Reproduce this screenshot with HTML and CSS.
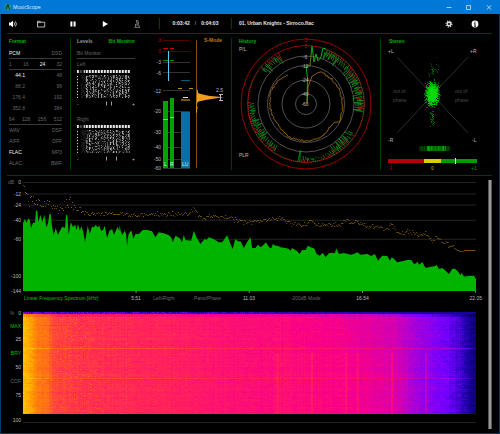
FILE: index.html
```html
<!DOCTYPE html>
<html lang="en">
<head>
  <meta charset="UTF-8">
  <meta name="viewport" content="width=device-width, initial-scale=1.0">
  <title>MusicScope</title>
  <link rel="stylesheet" href="styles.css">
</head>
<body>
  <div class="window">
    <header class="titlebar">
      <svg class="logo" viewBox="0 0 8 8"><circle cx="4" cy="4" r="3.6" fill="#1a8f8a"/><path d="M2 6.5 4 1.2 4.6 4 6 6.8M2.2 3.2h2" fill="none" stroke="#0a3b38" stroke-width="1"/></svg>
      <span class="app-name">MusicScope</span>
      <button aria-label="Minimize"><svg viewBox="0 0 6 6"><path d="M.5 3.5h5"/></svg></button>
      <button aria-label="Maximize"><svg viewBox="0 0 6 6"><path d="M.5 1.5h4v4h-4z"/></svg></button>
      <button aria-label="Close"><svg viewBox="0 0 6 6"><path d="M.8 1.2l4.4 4.4M5.2 1.2.8 5.6"/></svg></button>
    </header>

    <main class="main">
      <div class="toolbar">
        <button class="volume" aria-label="Volume"><svg viewBox="0 0 10 8"><path d="M1 2.6h1.8L5 .8v6.4L2.8 5.4H1z" fill="#fff"/><path d="M6 2.4q1.2 1.6 0 3.2M7.4 1.4q2 2.6 0 5.2" fill="none" stroke="#ccc" stroke-width=".9"/></svg></button>
        <button aria-label="Open"><svg viewBox="0 0 10 8"><path d="M1.5 7V1.2h2.6l.8 1h3.8V7zM1.5 2.6h3.4" fill="none" stroke="#ddd" stroke-width=".8"/></svg></button>
        <button aria-label="Pause"><svg viewBox="0 0 10 8"><path d="M2.4 1.4h2v5.2h-2zM5.6 1.4h2v5.2h-2z" fill="#fff"/></svg></button>
        <button aria-label="Play"><svg viewBox="0 0 10 8"><path d="M2.8 1l5.2 3-5.2 3z" fill="#fff"/></svg></button>
        <button aria-label="Analyse"><svg viewBox="0 0 10 8"><path d="M4.2.6 5.6.2 6.6 3.4l-1.3.4zM5.8 4.4q1.8.2 1.4 2.4M3.4 5h2.6M2.4 7.4h5.6M4 3.6Q3 5 3.6 6.8" fill="none" stroke="#aaa" stroke-width=".7"/></svg></button>
        <div class="time"><span>0:03:42</span><span class="slash">/</span><span>0:04:03</span></div>
        <div class="track">01. Urban Knights - Sirroco.flac</div>
        <button class="narrow" aria-label="Settings"><svg viewBox="0 0 10 8"><circle cx="5" cy="4" r="2.9" fill="none" stroke="#ddd" stroke-width="1.2" stroke-dasharray="1.2 1.08"/><circle cx="5" cy="4" r="1.7" fill="none" stroke="#ddd" stroke-width="1.4"/></svg></button>
        <button class="narrow info" aria-label="Info"><svg viewBox="0 0 10 8"><circle cx="5" cy="4" r="3.4" fill="#fff"/><path d="M5 1.6v1.2M5 3.4v2.8M4.2 6.2h1.8M4.2 3.6h.8" stroke="#000" stroke-width=".9"/></svg></button>
      </div>

      <div class="panels">
        <section class="panel format">
          <h2>Format</h2>
          <div class="row line"><b>PCM</b><span>DSD</span></div>
          <div class="row line"><span>1</span><span>16</span><b>24</b><span>32</span></div>
          <div class="row rate"><b>44.1</b><span>48</span></div>
          <div class="row rate"><span>88.2</span><span>96</span></div>
          <div class="row rate"><span>176.4</span><span>192</span></div>
          <div class="row rate"><span>352.8</span><span>384</span></div>
          <div class="row line"><span>64</span><span>128</span><span>256</span><span>512</span></div>
          <div class="row"><span>WAV</span><span>DSF</span></div>
          <div class="row"><span>AIFF</span><span>DFF</span></div>
          <div class="row"><b>FLAC</b><span>MP3</span></div>
          <div class="row"><span>ALAC</span><span>BWF</span></div>
        </section>

        <section class="panel levels">
          <h2><span class="off">Levels</span><span>Bit Monitor</span></h2>
          <div class="row line"><span>Bit Monitor</span></div>
          <div class="row"><span>Left</span></div>
          <canvas class="bits" width="53" height="28"></canvas>
          <svg class="bit-scale" viewBox="0 0 58 10"><text x="0" y="7">-</text><path d="M29.5 2.5v4M34.5 2.5v4" stroke="#999"/><text x="58" y="7" text-anchor="end">+</text></svg>
          <div class="row"><span>Right</span></div>
          <canvas class="bits" width="53" height="28"></canvas>
          <svg class="bit-scale" viewBox="0 0 58 10"><text x="0" y="7">-</text><path d="M29.5 2.5v4M39.5 2.5v4" stroke="#999"/><text x="58" y="7" text-anchor="end">+</text></svg>
        </section>

        <section class="panel meters">
          <svg viewBox="0 4 86 132">
            <path d="M18 6.5h27M18 17.5h27" stroke="#500"/>
            <path d="M18 28.5h27M18 38.5h27M18 56.5h27M18 77.5h27M18 98.5h27M18 113.5h27M18 125.5h27M18 134.5h27" stroke="#333"/>
            <g text-anchor="end">
              <g class="red"><text x="16" y="8">3</text><text x="16" y="19">0</text></g>
              <text x="16" y="30">-3</text><text x="16" y="41">-6</text><text x="16" y="59">-12</text><text x="16" y="79">-20</text>
              <text x="16" y="100">-30</text><text x="16" y="115">-40</text><text x="16" y="127">-50</text><text x="16" y="136">-60</text>
            </g>
            <path d="M18 14.5h5M25 14.5h4" stroke="#c00"/>
            <path d="M18 26.5h5M25 26.5h4" stroke="#080"/>
            <path d="M23.5 17v30" stroke="#5cc8ec"/>
            <path d="M36 46.5h9" stroke="#0a5a80"/>
            <path d="M33 54.5h4M44 54.5h4" stroke="#c80"/>
            <path d="M38 63.5h5" stroke="#ddd"/>
            <path d="M36 66h9" stroke="#7a4f0c" stroke-width="2"/>
            <path d="M18 67h5v67h-5zM25 64h4v70h-4z" fill="#00a400"/>
            <path d="M18 85.5h5M25 83.5h4" stroke="#3cff3c"/>
            <path d="M36 78h9v56h-9z" fill="#0672a4"/>
            <g class="bar-names"><text x="19" y="132">L</text><text x="25" y="132">R</text><text x="37" y="132">LU</text></g>
            <path d="M51.5 6v128" stroke="#7a500f"/>
            <path d="M52 55l1 2v2l3 1 4 1 5 1 9 .7 5 .6-6 .6-5 .8-6 1-5 1-4 1-1 2v3l1 1-1 1v4h-1z" fill="#f29d1f"/>
            <path d="M75.5 60v6M74 60.5h4M74 66.5h4" fill="none" stroke="#bbb"/>
            <text x="71" y="58">2.5</text>
            <text class="mode" x="59" y="8">S-Mode</text>
          </svg>
        </section>

        <section class="panel history">
          <svg viewBox="0 4 148 132">
            <g fill="none" stroke="#505050">
              <circle cx="74" cy="70" r="10.5"/><circle cx="74" cy="70" r="24"/><circle cx="74" cy="70" r="38.5"/><circle cx="74" cy="70" r="48"/>
            </g>
            <g fill="none" stroke="#900"><circle cx="74" cy="70" r="58.5"/><circle cx="74" cy="70" r="65"/></g>
            <g id="spikes" fill="none" stroke-width=".7"></g>
            <path d="M75 68 75.5 44 74 32h4L80 12l2 16 2-8 2 7 3-4 2-9 3 1" fill="none" stroke="#00b020"/>
            <path d="M78 31 79 20M75 68 76 55" stroke="#a22" stroke-width=".6"/>
            <path id="plr" fill="none" stroke="#b9791a" stroke-width=".8"/>
            <g text-anchor="middle">
              <g class="red"><text x="74" y="8">3</text><text x="74" y="14">0</text></g>
              <text x="73" y="25">-6</text><text x="73" y="34">-12</text><text x="73" y="48">-24</text><text x="73" y="62">-40</text><text x="73" y="72">-60</text>
            </g>
            <text class="title" x="7" y="9">History</text>
            <text x="7" y="17">P/L</text><text x="7" y="123">PLR</text>
          </svg>
        </section>

        <section class="panel stereo">
          <svg viewBox="0 4 111 132">
            <path d="M16 23 87 99M87 23 16 99" stroke="#383838" stroke-width=".8"/>
            <g id="cloud" fill="#00e000"></g>
            <g id="pan" fill="#00c000"></g>
            <text class="title" x="8" y="9">Stereo</text>
            <text x="7" y="19">+L</text><text x="89" y="19">+R</text>
            <text x="7" y="108">-R</text><text x="91" y="108">-L</text>
            <g class="dim"><text x="12" y="59">out of</text><text x="12" y="68">phase</text><text x="74" y="59">out of</text><text x="74" y="68">phase</text></g>
            <path d="M7 125h36v4H7z" fill="#b80000"/><path d="M43 125h17v4H43z" fill="#d8d000"/><path d="M60 125h36v4H60z" fill="#009a00"/>
            <path d="M74.5 124v6" stroke="#dfd"/>
            <text class="red" x="7" y="136">-1</text><text class="yellow" x="50" y="136">0</text><text class="green" x="90" y="136">+1</text>
          </svg>
        </section>
      </div>

      <div class="charts-wrap">
        <div class="charts">
          <section class="chart spectrum">
            <div class="scale">
              <span><i>dB</i>0</span><span>-12</span><span>-24</span><span>-40</span><span>-60</span><span class="low">-100</span><span class="lowest">-144</span>
            </div>
            <svg class="plot" viewBox="68 24 1358 333" preserveAspectRatio="none">
              <path d="M68 25.5H1426M68 60H1426M68 93H1426M68 139H1426M68 196H1426M68 306H1426" stroke="#242424" stroke-width="3"/>
              <g id="peaks" fill="#9a6c0c"></g>
              <polygon fill="#00b400" points="68,351 68,148 74,134 78,146 84,134 88,136 92,162 98,146 104,146 107,110 111,110 114,145 120,122 126,145 132,122 138,160 143,148 147,120 151,120 155,158 160,182 166,162 173,182 180,168 186,158 194,162 197,123 201,124 205,182 211,145 218,158 225,152 228,168 233,150 238,170 243,156 249,175 254,205 262,155 268,180 275,158 281,160 286,152 291,160 297,155 302,170 308,168 313,155 320,192 327,170 335,165 341,182 346,170 352,158 356,170 358,154 361,172 366,182 373,170 377,180 380,215 384,182 390,172 394,172 399,195 405,180 415,180 427,168 440,168 455,172 465,190 475,175 490,178 505,184 512,190 517,205 525,185 537,192 545,205 550,182 555,198 572,200 580,170 588,190 600,210 612,195 618,198 625,190 640,196 655,205 665,205 680,184 692,215 697,225 704,195 712,202 720,202 730,222 740,204 750,190 755,222 765,222 772,212 780,220 788,214 796,205 803,215 808,222 813,222 817,210 825,215 832,215 840,220 855,222 865,225 870,230 875,222 890,232 897,240 905,228 915,228 922,215 930,220 938,222 942,225 948,240 958,245 967,236 975,250 985,238 995,236 1003,238 1007,223 1015,240 1030,237 1050,242 1060,240 1070,235 1080,242 1100,240 1112,246 1123,240 1132,260 1145,245 1160,246 1168,260 1173,250 1180,254 1190,265 1205,262 1220,258 1232,258 1240,270 1247,268 1250,262 1255,272 1265,265 1275,282 1290,278 1305,276 1308,272 1315,285 1325,282 1335,290 1345,300 1355,284 1363,284 1370,290 1380,304 1383,296 1390,308 1405,306 1420,306 1426,316 1426,351"/>
              <path d="M407 351v6M746 351v6M1086 351v6M1425 351v6" stroke="#888" stroke-width="3"/>
            </svg>
            <div class="axis">
              <button class="on">Linear Frequency Spectrum [kHz]</button>
              <span>5.51</span>
              <button>Left/Right</button>
              <button>Pano/Phase</button>
              <span>11.03</span>
              <button>-200dB Mode</button>
              <span>16.54</span>
              <span class="last">22.05</span>
            </div>
          </section>

          <section class="chart spectrogram">
            <div class="scale">
              <span><i>%</i>0</span><button class="on">MAX</button><span>25</span><button class="on">BRY</button><span>50</span><button>COF</button><span>75</span><span class="low">100</span>
            </div>
            <div class="plot">
              <canvas id="heat" width="453" height="102"></canvas>
            </div>
          </section>
        </div>
        <div class="scrollbar"></div>
      </div>
    </main>
  </div>
  <script src="script.js"></script>
</body>
</html>
```
FILE: styles.css
```css
* {
  box-sizing: border-box;
}
body {
  margin: 0;
  background: #000;
  color: #bbb;
  font: 5px/11px "Liberation Sans", Arial, sans-serif;
}
button {
  padding: 0;
  border: 0;
  background: none;
  color: inherit;
  font: inherit;
}
svg,
canvas {
  display: block;
}
.window {
  min-height: 100vh;
  border: solid #003a66;
  border-width: 0 1px 1px;
}

/* title bar */
.titlebar {
  display: flex;
  align-items: center;
  height: 14px;
  margin: 0 -1px;
  padding: 0 1px 0 4px;
  background: #0078d7;
}
.logo {
  width: 8px;
  height: 8px;
}
.app-name {
  flex: 1;
  padding-left: 1px;
  color: #e4f1fc;
  font-family: "Open Sans", sans-serif;
}
.titlebar button {
  display: flex;
  justify-content: center;
  width: 20px;
}
.titlebar button svg {
  width: 6px;
  height: 6px;
  fill: none;
  stroke: #cfe5f8;
  stroke-width: .8;
}
.main {
  padding: 0 7px 0 6px;
}

/* toolbar */
.toolbar {
  display: flex;
  align-items: center;
  height: 20px;
  border-bottom: 1px solid #004000;
  color: #e6e6e6;
  font-weight: bold;
}
.toolbar button {
  display: flex;
  justify-content: center;
  width: 32px;
}
.toolbar button.volume {
  width: 12px;
  margin-right: 6px;
}
.toolbar button.narrow {
  width: 26px;
}
.toolbar button.info {
  margin-right: 4px;
}
.toolbar svg {
  width: 10px;
  height: 8px;
}
.time {
  display: flex;
  justify-content: center;
  gap: 5px;
  width: 73px;
  margin-left: 6px;
  border: solid #004000;
  border-width: 0 1px;
}
.slash {
  color: #888;
}
.track {
  flex: 1;
  padding-left: 7px;
}

/* panels */
.panels {
  display: grid;
  grid-template-columns: 64fr 74fr 87fr 149fr 111fr;
  padding: 4px 0 5px;
  border-bottom: 1px solid #004000;
}
.panel {
  border-right: 1px solid #003c00;
}
.levels,
.stereo {
  border-right: 0;
}
.panel h2 {
  display: flex;
  justify-content: space-between;
  margin: 0 0 4px;
  color: #00b400;
  font-size: 5px;
  line-height: 6px;
}
.panel h2 .off {
  color: #999;
}
.format {
  padding: 0 8px 0 2px;
}
.levels {
  padding: 0 10px 0 6px;
}
.row {
  display: flex;
  justify-content: space-between;
  height: 11px;
  color: #666;
}
.row b {
  color: #f0f0f0;
  font-weight: normal;
}
.line {
  border-bottom: 1px solid #3a3a3a;
}
.rate :first-child {
  width: 16px;
  text-align: right;
}
.bits {
  width: 53px;
  height: 28px;
}
.bit-scale {
  margin: 1px 0 5px;
}
.panel text {
  fill: #bbb;
  font-size: 5px;
}
.panel .bar-names text {
  fill: #dfd;
}
.panel .title {
  fill: #00b400;
  font-weight: bold;
}
.panel .mode {
  fill: #b87a14;
  font-weight: bold;
}
.panel .red text,
.panel .red {
  fill: #c00000;
}
.panel .yellow {
  fill: #c0b800;
}
.panel .green {
  fill: #00a000;
}
.panel .dim text {
  fill: #484848;
}

/* charts */
.charts-wrap {
  display: flex;
}
.charts {
  flex: 1;
}
.chart {
  display: grid;
  grid-template-columns: 16px 1fr 12px;
}
.spectrum {
  grid-template-rows: 116px 10px;
  margin-top: 1px;
}
.spectrogram {
  margin-top: 4px;
}
.scale {
  display: grid;
  grid-row: 1 / 3;
  align-items: center;
  justify-items: end;
  padding-right: 2px;
}
.scale > * {
  white-space: nowrap;
}
.scale i {
  margin-right: 4px;
  color: #666;
  font-style: normal;
}
.scale button,
.axis button {
  color: #666;
}
.scale .on,
.axis .on {
  color: #00c000;
}
.spectrum .scale {
  grid-template-rows: 11px 12px 11px 19px 19px 18px 18px 12px;
}
.spectrum .low {
  grid-row: 7;
}
.spectrum .lowest {
  grid-row: 8;
}
.spectrum .plot {
  width: 100%;
  height: 111px;
  margin-top: 5px;
}
.axis {
  display: grid;
  grid-column: 2 / 4;
  grid-template-columns: 100fr 26fr 30fr 57fr 26fr 87fr 27fr 112fr;
  line-height: 10px;
  text-align: center;
  white-space: nowrap;
}
.axis > :first-child {
  padding-left: 1px;
  text-align: left;
}
.axis .last {
  padding-right: 6px;
  text-align: right;
}
.spectrogram .scale {
  grid-template-rows: 13px 13px 13px 14px 14px 14px 14px 12px 12px;
}
.spectrogram .low {
  grid-row: 9;
}
.spectrogram .plot {
  height: 116px;
  padding-top: 5px;
  border-bottom: 1px solid #222;
}
#heat {
  width: 100%;
  height: 102px;
}
.scrollbar {
  width: 4px;
  margin: 4px 0 -3px;
  border: solid #555;
  border-width: 0 1px;
  background: #999;
}
```
FILE: script.js
```js
let seed = 7
function rnd() {
  seed = (seed * 16807) % 2147483647
  return seed / 2147483647
}
function gauss() {
  return rnd() + rnd() + rnd() + rnd() - 2
}
function rect(x, y, w, h, a) {
  return `<rect x="${x}" y="${y}" width="${w}" height="${h}" opacity="${a.toFixed(2)}"/>`
}
function lerp(points, x) {
  let i = 1
  while (i < points.length - 1 && points[i][0] < x) i++
  const [x0, y0] = points[i - 1]
  const [x1, y1] = points[i]
  return y0 + (y1 - y0) * (x - x0) / (x1 - x0)
}

// bit monitor
document.querySelectorAll('.bits').forEach(c => {
  const g = c.getContext('2d')
  const levels = [1, 0.3, 0.75]
  for (let x = 0; x < 53; x++) {
    let top = [1, 0.8, 0.25][x % 3]
    if (x > 1 && x < 7) top *= 0.3
    g.fillStyle = `rgba(235,235,235,${top})`
    g.fillRect(x, 0, 1, 3)
    const col = x < 8 ? 0.12 : levels[(x * 2) % 3] * (0.4 + rnd() * 0.4)
    for (let y = 5; y < 28; y++) {
      let a = rnd() < 0.5 ? col : col * 0.15
      if (x === 0) a = y % 3 ? 0.15 : 0.9
      if (x > 0 && x < 4) a = 0
      g.fillStyle = `rgba(225,225,225,${a})`
      g.fillRect(x, y, 1, 1)
    }
  }
})

// history: [from, to, depth] in degrees clockwise from the top
const bursts = [[20, 58, 12], [58, 97, 11], [122, 150, 11], [150, 184, 6], [214, 240, 10], [240, 272, 10], [308, 332, 13]]
let green = ''
let red = ''
function pt(deg, r) {
  const a = deg * Math.PI / 180
  return (74 + Math.sin(a) * r).toFixed(1) + ' ' + (70 - Math.cos(a) * r).toFixed(1)
}
bursts.forEach(([from, to, depth]) => {
  for (let d = from; d < to; d += 2.7) {
    const r = 58 - depth * (0.5 + rnd() * 0.5)
    green += `M${pt(d, 57 - rnd() * 2)}L${pt(d + 1, r)}`
    if (rnd() < 0.4) green += `L${pt(d + 1.6, 57)}`
    if (rnd() < 0.7) red += `M${pt(d + 1.6, 58)}L${pt(d + 1.8, r + 3)}`
  }
})
green += `M${pt(186, 58)}L${pt(187, 47)}L${pt(188, 58)}`
for (let d = 20; d < 305; d += 2) {
  green += `M${pt(d, 58)}L${pt(d + 0.8, 58)}`
}
document.getElementById('spikes').innerHTML = `<path stroke="#c22" d="${red}"/><path stroke="#00b020" d="${green}"/>`

const plr = [[12, 28], [17, 31], [22, 35], [35, 35], [60, 36], [90, 36], [118, 38], [125, 33], [135, 33], [150, 36], [180, 37], [205, 37], [222, 35], [245, 35], [270, 36], [290, 37], [310, 36], [328, 34]]
let d = 'M75 70 76 53'
for (let a = 12; a <= 328; a += 2) {
  d += 'L' + pt(a, lerp(plr, a) + gauss() * 0.8)
}
document.getElementById('plr').setAttribute('d', d)

// stereo cloud and panorama
let cloud = ''
for (let i = 0; i < 1300; i++) {
  cloud += rect(Math.round(51 + gauss() * 5), Math.round(60 + gauss() * 9), 1, 1, 0.3 + rnd() * 0.3)
}
for (let i = 0; i < 34; i++) {
  cloud += rect(Math.round(51 + gauss() * 5), Math.round(37 + gauss() * 8), 1, 1, 0.3)
  cloud += rect(Math.round(51 + gauss() * 2), Math.round(82 + gauss() * 9), 1, 1, 0.4)
}
document.getElementById('cloud').innerHTML = cloud
let pan = ''
for (let x = 38; x < 69; x++) {
  pan += rect(x, 112, 1, 5, (x < 46 || x > 64 ? 0.4 : 1) * (0.2 + rnd() * 0.8))
}
document.getElementById('pan').innerHTML = pan

// spectrum peaks
const peak = [[68, 55], [75, 48], [85, 75], [100, 75], [120, 88], [150, 92], [175, 110], [190, 95], [210, 85], [230, 105], [260, 118], [350, 118], [420, 120], [560, 120], [585, 107], [600, 132], [650, 125], [700, 137], [750, 142], [800, 135], [840, 132], [870, 145], [910, 152], [932, 138], [950, 152], [1020, 152], [1037, 135], [1050, 152], [1070, 143], [1095, 158], [1130, 155], [1155, 168], [1174, 150], [1195, 180], [1230, 172], [1260, 185], [1275, 176], [1295, 200], [1306, 188], [1330, 205], [1350, 215], [1370, 228], [1382, 232], [1390, 229], [1426, 229]]
let peaks = ''
for (let x = 68; x < 1424; x += 3) {
  const spread = x < 230 ? 14 : x > 1360 ? 0 : 7
  const y = lerp(peak, x) + gauss() * spread
  peaks += rect(x, Math.round(y / 3) * 3, 3, 3, x > 1390 ? 1 : 0.5 + rnd() * 0.5)
}
document.getElementById('peaks').innerHTML = peaks

// spectrogram
const palette = [[0, [0, 0, 80]], [0.12, [30, 0, 170]], [0.25, [115, 0, 255]], [0.38, [190, 0, 200]], [0.52, [250, 0, 135]], [0.66, [255, 36, 88]], [0.8, [255, 100, 30]], [0.92, [255, 150, 0]], [1, [255, 195, 0]]]
const level = [[0, 0.98], [8, 0.94], [14, 0.86], [24, 0.82], [30, 0.74], [60, 0.69], [140, 0.65], [200, 0.59], [250, 0.56], [320, 0.51], [370, 0.43], [395, 0.33], [415, 0.27], [430, 0.22], [440, 0.15], [447, 0.08], [453, 0.05]]
function color(v) {
  v = Math.min(1, Math.max(0, v))
  return palette[0][1].map((_, i) => Math.round(lerp(palette.map(p => [p[0], p[1][i]]), v)))
}
const heat = document.getElementById('heat').getContext('2d')
const img = heat.createImageData(453, 102)
const cols = Array.from({ length: 453 }, () => gauss() * 0.014)
// steady tones, by column
const tones = { 254: 0.6, 288: 1, 322: 1, 334: 1, 368: 1.4, 402: 1 }
for (let y = 0; y < 102; y++) {
  const rowShift = gauss() * 0.014
  let n = 0
  for (let x = 0; x < 453; x++) {
    if (x % 3 === 0) n = gauss() * 0.024
    let v = lerp(level, x) + cols[x] + rowShift + n
    if (y < 2) v = 0.1 + rnd() * 0.25 * (1 - x / 453)
    else if (y < 5) v -= 0.07
    if (y === 36 || y === 66) v += 0.07
    if (y > 40) v += 0.07 * (tones[x] || tones[x - 1] || 0) + (x > 250 && x < 385 ? 0.02 : 0)
    if (x > 34 && x < 75 && rnd() < 0.03) v += 0.1
    const [r, g, b] = color(v)
    img.data.set([r, g, b, 255], (y * 453 + x) * 4)
  }
}
heat.putImageData(img, 0, 0)
```
